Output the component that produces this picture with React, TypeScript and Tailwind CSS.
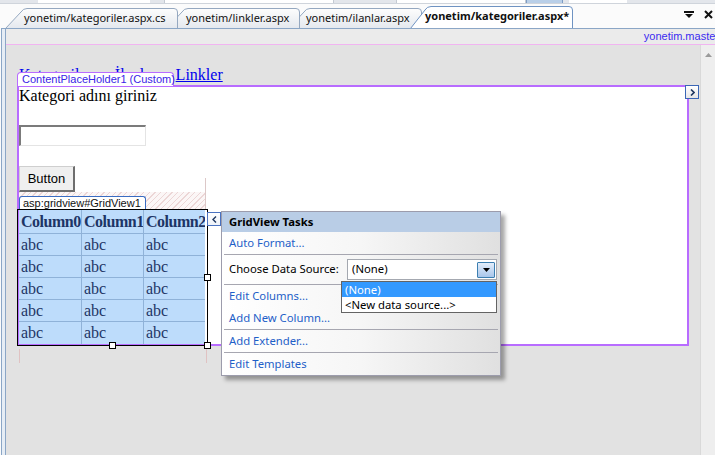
import React from "react";

type TabProps = {
  w: number;
  h: number;
  s: number;
  label: string;
  active?: boolean;
  cls: string;
  pad: string;
  id: string;
};

function Tab({ w, h, s, label, active, cls, pad, id }: TabProps) {
  const d = `M0.5 ${h + 0.5} L${s - 1} 4 Q${s + 1} 0.5 ${s + 5} 0.5 L${w - 4} 0.5 Q${w - 0.5} 0.5 ${w - 0.5} 4 L${w - 0.5} ${h + 0.5}`;
  return (
    <div className={`relative shrink-0 ${cls}`}>
      <svg className="absolute inset-0" width={w} height={h} viewBox={`0 0 ${w} ${h}`}>
        <defs>
          <linearGradient id={id} x1="0" y1="0" x2="0" y2="1">
            <stop offset="0" stopColor={active ? "#ffffff" : "#fdfdfd"} />
            <stop offset="1" stopColor={active ? "#ffffff" : "#e4e8ee"} />
          </linearGradient>
        </defs>
        <path d={d + " Z"} fill={`url(#${id})`} />
        <path d={d} fill="none" stroke={active ? "#6f93c2" : "#95a8c0"} />
      </svg>
      <span
        className={`relative block whitespace-nowrap text-[11px] leading-[20px] text-[#111] ${active ? "font-bold" : ""} ${pad}`}
      >
        {label}
      </span>
    </div>
  );
}

const cellBase = "border-r border-[#8fb2d8] pl-[2px] overflow-hidden whitespace-nowrap";

function GridRow({ header }: { header?: boolean }) {
  const txt = header ? ["Column0", "Column1", "Column2"] : ["abc", "abc", "abc"];
  return (
    <div
      className={`flex ${header ? "h-[24px] font-bold tracking-[-0.5px]" : "h-[22px]"} border-b border-[#8fb2d8] last:border-b-0 items-center`}
    >
      <div className={`w-[63px] h-full flex items-center ${cellBase}`}>{txt[0]}</div>
      <div className={`w-[62px] h-full flex items-center ${cellBase}`}>{txt[1]}</div>
      <div className="w-[61px] h-full flex items-center pl-[2px] overflow-hidden whitespace-nowrap">{txt[2]}</div>
    </div>
  );
}

export default function App() {
  return (
    <div className="relative w-[715px] h-[455px] overflow-hidden bg-[#fbfbfb] flex flex-col [font-family:'Noto_Sans',sans-serif]">
      {/* toolbar remnant */}
      <div className="h-[4px] shrink-0 flex bg-[#e3e6eb] border-b border-[#cfd4db]">
        <div className="ml-[38px] w-[112px] bg-white" />
        <div className="ml-[14px] w-[170px] bg-white border-x border-[#c4cad2]" />
        <div className="ml-[62px] w-[130px] bg-white border-x border-[#c4cad2]" />
        <div className="w-[37px] bg-[#b9cfe8] border-x border-[#7d9cc4]" />
        <div className="ml-[6px] w-[58px] bg-white" />
      </div>

      {/* tab row */}
      <div className="relative h-[24px] shrink-0 flex items-end">
        <Tab id="t1" w={173} h={20} s={17} cls="ml-[5px] w-[173px] h-[20px] z-[4]" pad="pl-[19px]" label="yonetim/kategoriler.aspx.cs" />
        <Tab id="t2" w={134} h={20} s={17} cls="ml-[-12px] w-[134px] h-[20px] z-[3]" pad="pl-[20px]" label="yonetim/linkler.aspx" />
        <Tab id="t3" w={134} h={20} s={17} cls="ml-[-12px] w-[134px] h-[20px] z-[2]" pad="pl-[18px]" label="yonetim/ilanlar.aspx" />
        <Tab id="t4" w={163} h={22} s={16} active cls="ml-[-12px] w-[163px] h-[22px] z-[5]" pad="pl-[15px]" label="yonetim/kategoriler.aspx*" />
        <div className="ml-auto mr-[2px] mb-[9px] flex items-center gap-[10px]">
          <svg width="10" height="8" viewBox="0 0 10 8">
            <rect x="0" y="0" width="10" height="2" fill="#111" />
            <path d="M1 3 H9 L5 7 Z" fill="#111" />
          </svg>
          <svg width="9" height="9" viewBox="0 0 9 9">
            <path d="M1 1 L8 8 M8 1 L1 8" stroke="#111" strokeWidth="2" />
          </svg>
        </div>
      </div>

      {/* document frame */}
      <div className="flex-1 min-h-0 flex ml-[1px] border-l border-t border-[#8ba6c6] bg-[#e6edf5]">
        <div className="flex-1 min-w-0 flex flex-col ml-[3px] border-l border-[#8ba6c6]">
          <div className="h-[16px] shrink-0 bg-[#ebebeb] border-b border-[#f1b4f1] flex justify-end items-center overflow-hidden">
            <span className="text-[11px] text-[#3b2cf0] [font-family:'Liberation_Sans',sans-serif] leading-none whitespace-nowrap mr-[-4px]">
              yonetim.master
            </span>
          </div>
          <div className="flex-1 min-h-0 flex">
            {/* design surface */}
            <div className="flex-1 min-w-0 bg-[#e2e2e2] pl-[11px] pt-[19px]">
              <div className="h-[21px] pl-[2px] flex text-[16px] leading-[21px] text-[#0000ee] underline [font-family:'Liberation_Serif',serif]">
                <span>Kategoriler</span>
                <span className="ml-[23px]">İlanlar</span>
                <span className="ml-[19px]">Linkler</span>
              </div>
              <div className="w-[672px] h-[261px] border-2 border-[#b86cff] bg-white [font-family:'Liberation_Serif',serif] text-[16px]">
                <div className="h-[18px] leading-[18px] text-black whitespace-nowrap">Kategori adını giriniz</div>
                <div className="mt-[20px] w-[127px] h-[21px] bg-white border-t-2 border-l-2 border-r border-b border-t-[#7b7b7b] border-l-[#7b7b7b] border-r-[#e4e4e4] border-b-[#e4e4e4]" />
                <div className="mt-[20px] w-[56px] h-[26px] flex items-center justify-center bg-[#efefef] border border-[#cfcfcf] border-r-2 border-b-2 border-r-[#6e6e6e] border-b-[#6e6e6e] text-[13px] text-black [font-family:'Liberation_Sans',sans-serif]">
                  Button
                </div>
                <div className="w-[186px] h-[17px] bg-[repeating-linear-gradient(135deg,#ecd6d6_0px,#ecd6d6_1px,#fbf6f6_1px,#fbf6f6_4px)]" />
                <div className="w-[186px] mt-[1px] bg-[#bddcfb] text-[#1d3566]">
                  <GridRow header />
                  <GridRow />
                  <GridRow />
                  <GridRow />
                  <GridRow />
                  <GridRow />
                </div>
              </div>
            </div>
            {/* scrollbar */}
            <div className="w-[15px] shrink-0 bg-[#eeeeee] border-l border-[#d9d9d9] flex justify-center pt-[8px]">
              <svg width="7" height="4" viewBox="0 0 7 4">
                <path d="M0 4 L3.5 0 L7 4 Z" fill="#9a9a9a" />
              </svg>
            </div>
          </div>
        </div>
      </div>

      {/* ===== overlays ===== */}
      {/* ContentPlaceHolder tag */}
      <div className="absolute left-[17px] top-[72px] w-[157px] h-[14px] bg-white border border-b-0 border-[#b86cff] rounded-t-[4px] pl-[4px] text-[11px] leading-[13px] text-[#3a24e6] whitespace-nowrap [font-family:'Liberation_Sans',sans-serif]">
        ContentPlaceHolder1 (Custom)
      </div>
      {/* right smart tag on placeholder */}
      <div className="absolute left-[685px] top-[85px] w-[14px] h-[14px] border border-[#3a66b6] bg-linear-to-b from-white to-[#e6e6e6] flex items-center justify-center">
        <svg width="5" height="7" viewBox="0 0 5 7">
          <path d="M1 0.5 L4 3.5 L1 6.5" stroke="#1f3760" strokeWidth="1.6" fill="none" />
        </svg>
      </div>
      {/* gridview boundary line */}
      <div className="absolute left-[205px] top-[178px] w-px h-[31px] bg-[#dcc8c8]" />
      {/* gridview tag */}
      <div className="absolute left-[19px] top-[196px] w-[127px] h-[13px] bg-white border border-b-0 border-[#3a6cc2] rounded-t-[3px] pl-[3px] text-[11px] leading-[12px] text-[#111] whitespace-nowrap [font-family:'Liberation_Sans',sans-serif]">
        asp:gridview#GridView1
      </div>
      {/* selection rect */}
      <div className="absolute left-[17px] top-[209px] w-[191px] h-[137px] border border-black pointer-events-none" />
      {/* handles */}
      <div className="absolute left-[204px] top-[274px] w-[7px] h-[7px] bg-white border border-black" />
      <div className="absolute left-[109px] top-[342px] w-[7px] h-[7px] bg-white border border-black" />
      <div className="absolute left-[204px] top-[342px] w-[7px] h-[7px] bg-white border border-black" />
      {/* guide lines below */}
      <div className="absolute left-[19px] top-[349px] w-px h-[14px] bg-[#e0c2c2]" />
      <div className="absolute left-[206px] top-[349px] w-px h-[14px] bg-[#e0c2c2]" />
      {/* smart tag button */}
      <div className="absolute left-[207px] top-[212px] w-[14px] h-[14px] border border-[#4a72c0] bg-linear-to-b from-white to-[#eef2f8] flex items-center justify-center">
        <svg width="5" height="7" viewBox="0 0 5 7">
          <path d="M4 0.5 L1 3.5 L4 6.5" stroke="#1f3760" strokeWidth="1.4" fill="none" />
        </svg>
      </div>

      {/* GridView Tasks panel */}
      <div className="absolute left-[221px] top-[211px] w-[280px] border border-[#9c9cac] bg-linear-to-r from-white via-[#f6f6f6] to-[#e0e0e0] shadow-[4px_4px_4px_rgba(0,0,0,0.35)] text-[11.3px]">
        <div className="h-[20px] bg-[#b9cde6] flex items-center pl-[7px] font-bold text-black">GridView Tasks</div>
        <div className="h-[22px] flex items-center pl-[7px] text-[#1e5fc8]">Auto Format...</div>
        <div className="mx-[2px] h-px bg-[#a6a6b0]" />
        <div className="h-[29px] flex items-center pl-[7px] pr-[3px] text-black">
          <span>Choose Data Source:</span>
          <div className="ml-auto w-[150px] h-[21px] bg-white border border-[#a4a8b0] flex items-center pl-[4px] pr-[1px]">
            <span className="text-black">(None)</span>
            <div className="ml-auto w-[18px] h-[16px] rounded-[1px] border border-[#3c7fb1] bg-linear-to-b from-[#e3eefb] to-[#a9c6ea] flex items-center justify-center">
              <svg width="7" height="4" viewBox="0 0 7 4">
                <path d="M0 0 H7 L3.5 4 Z" fill="#000" />
              </svg>
            </div>
          </div>
        </div>
        <div className="mx-[2px] h-px bg-[#a6a6b0]" />
        <div className="h-[22px] flex items-center pl-[7px] text-[#1e5fc8]">Edit Columns...</div>
        <div className="h-[22px] flex items-center pl-[7px] text-[#1e5fc8]">Add New Column...</div>
        <div className="mx-[2px] h-px bg-[#a6a6b0]" />
        <div className="h-[22px] flex items-center pl-[7px] text-[#1e5fc8]">Add Extender...</div>
        <div className="mx-[2px] h-px bg-[#a6a6b0]" />
        <div className="h-[22px] flex items-center pl-[7px] text-[#1e5fc8]">Edit Templates</div>
      </div>

      {/* dropdown list */}
      <div className="absolute left-[341px] top-[281px] w-[156px] h-[32px] bg-white border border-[#646464] text-[11.3px]">
        <div className="h-[15px] bg-[#3399ff] text-white leading-[15px] pl-[3px]">(None)</div>
        <div className="h-[15px] text-black leading-[15px] pl-[3px]">&lt;New data source...&gt;</div>
      </div>
    </div>
  );
}
